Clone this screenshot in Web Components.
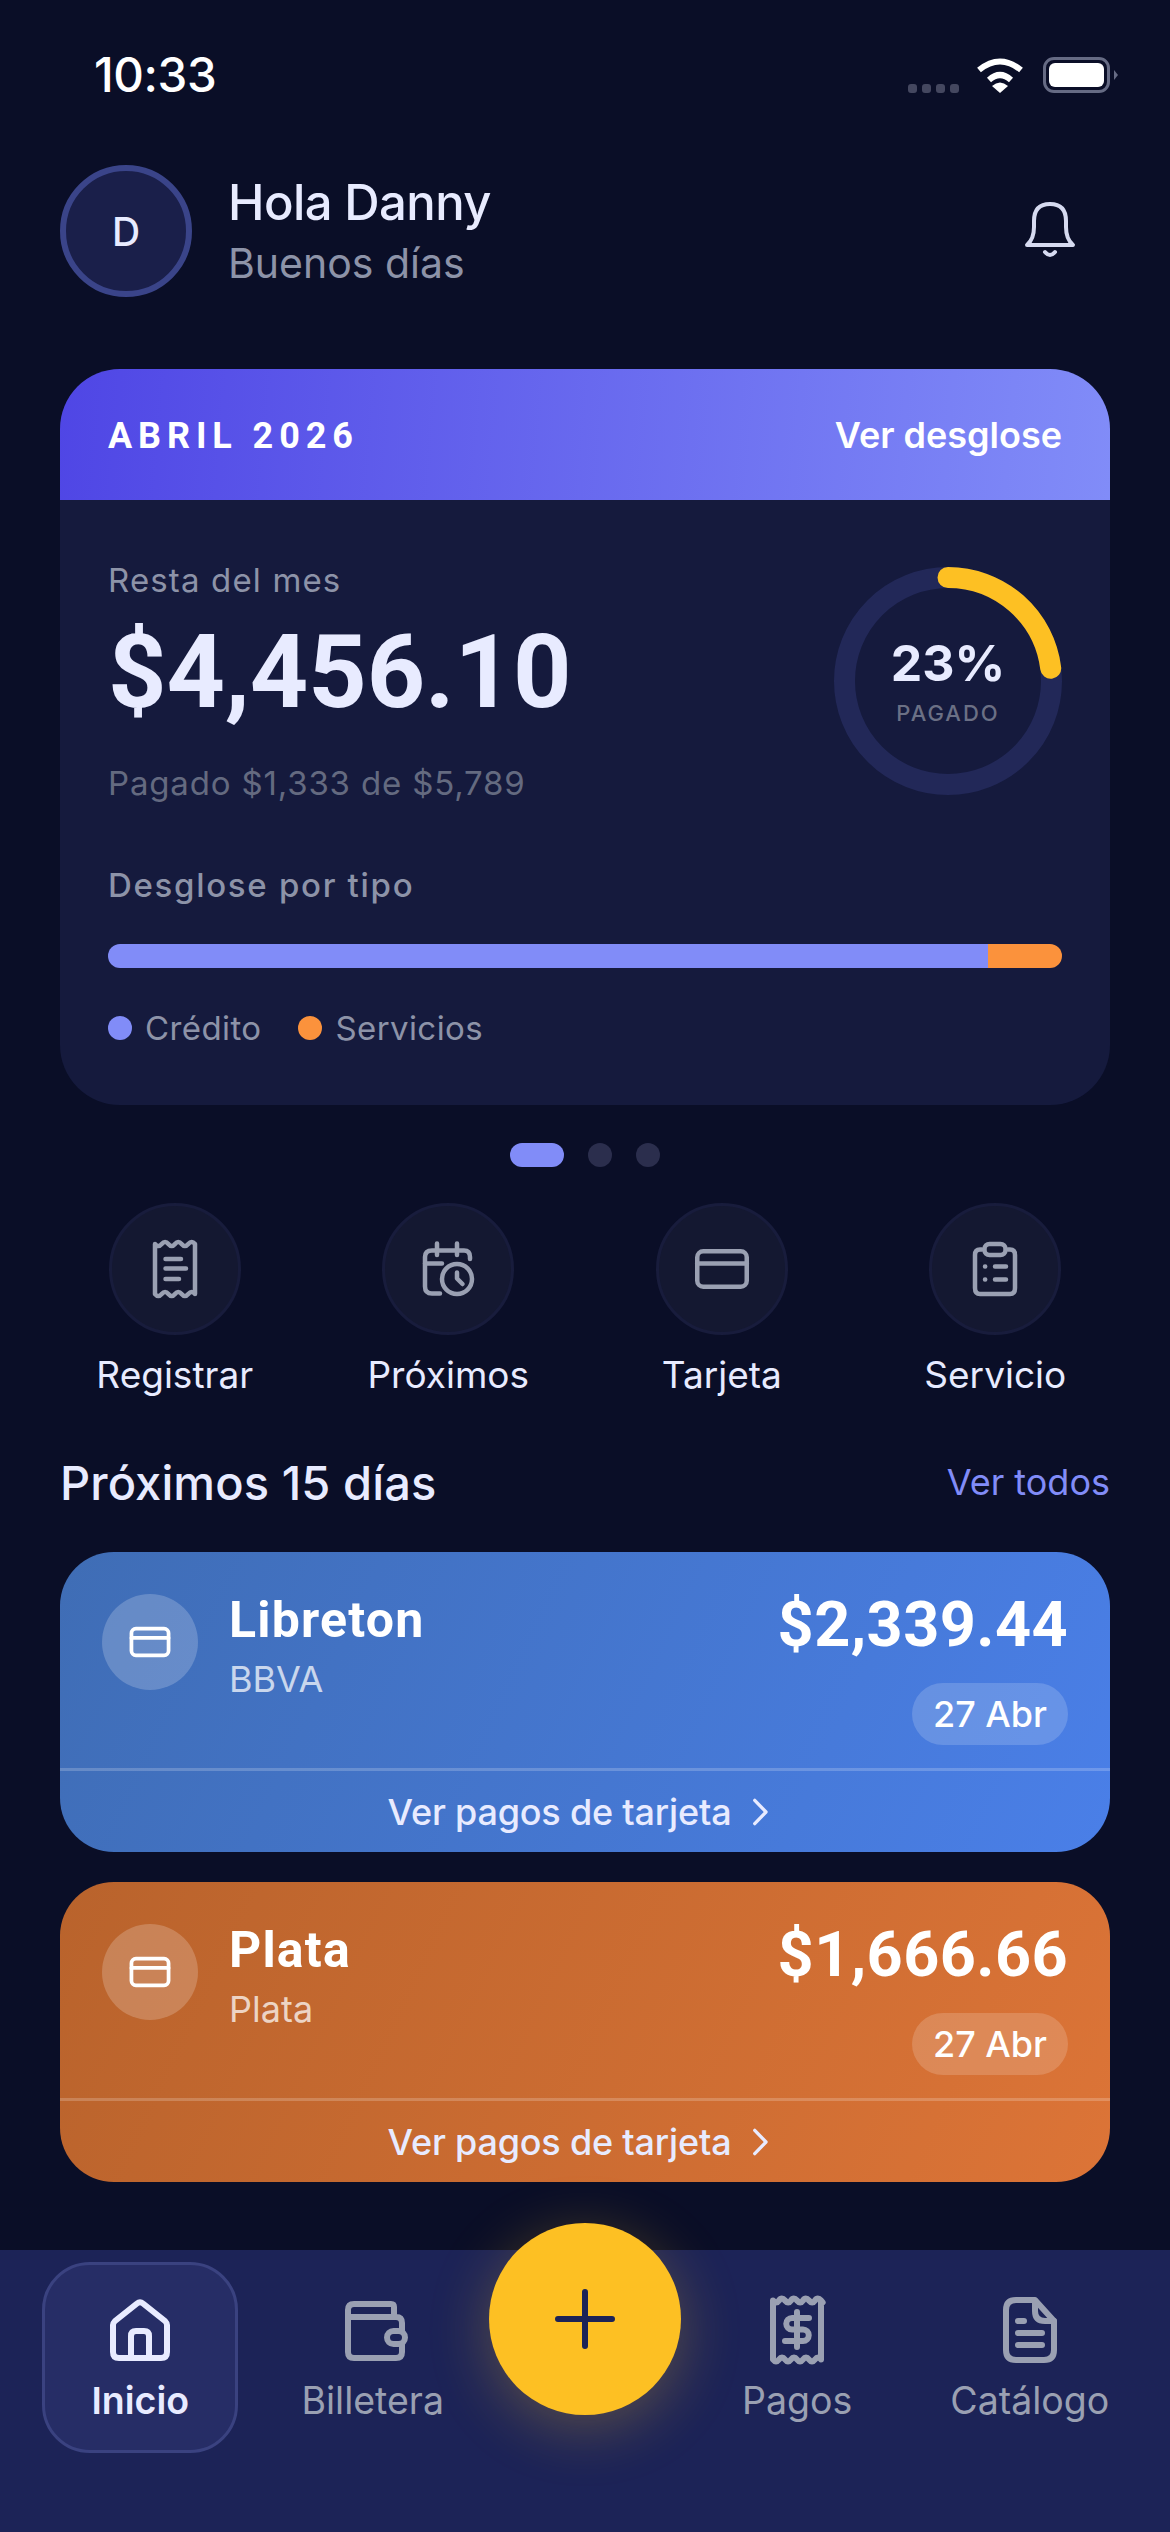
<!DOCTYPE html>
<html lang="es">
<head>
<meta charset="utf-8">
<title>Inicio</title>
<style>
  html, body { margin: 0; padding: 0; background: #0a0e27; }
  body { font-family: Inter, "Noto Sans", sans-serif; color: #e8ebff; }
  app-shell { height: 2532px; }
</style>
</head>
<body>
<app-shell>
  <status-bar time="10:33"></status-bar>
  <greeting-header initial="D" name="Hola Danny" sub="Buenos días"></greeting-header>
  <month-card></month-card>
  <pager-dots></pager-dots>
  <quick-actions>
    <quick-action label="Registrar" icon="receipt"></quick-action>
    <quick-action label="Próximos" icon="calendar"></quick-action>
    <quick-action label="Tarjeta" icon="card"></quick-action>
    <quick-action label="Servicio" icon="clipboard"></quick-action>
  </quick-actions>
  <section-head title="Próximos 15 días" link="Ver todos"></section-head>
  <due-card variant="blue" name="Libreton" bank="BBVA" amount="$2,339.44" date="27 Abr"></due-card>
  <due-card variant="orange" name="Plata" bank="Plata" amount="$1,666.66" date="27 Abr"></due-card>
  <tab-bar>
    <tab-item label="Inicio" icon="home" active></tab-item>
    <tab-item label="Billetera" icon="wallet"></tab-item>
    <fab-slot></fab-slot>
    <tab-item label="Pagos" icon="bill"></tab-item>
    <tab-item label="Catálogo" icon="doc"></tab-item>
  </tab-bar>
</app-shell>

<script>
// all icons live on a 72 box, stroke comes from the element
const ICONS = {
  receipt: `<path d="M16 11q3.3 4 6.7 0t6.7 0t6.6 0t6.6 0t6.7 0t6.7 0V61q-3.3-4-6.7 0t-6.7 0t-6.6 0t-6.6 0t-6.7 0t-6.7 0Z"/>
    <path d="M26.5 26H42M26.5 35.5H47M26.5 46H40" stroke-width="4.5"/>`,
  calendar: `<path d="M28 60.5H20Q13 60.5 13 53.5V24Q13 17.5 20 17.5H52Q58 17.5 58 24V26"/>
    <path d="M25 10.5V22M45 10.5V22M13 30.5H30"/>
    <circle cx="45" cy="46" r="15"/><path d="M45 39.5V45.5L50.5 51"/>`,
  card: `<rect x="11.25" y="18.25" width="49.5" height="35.5" rx="6"/><path d="M11.25 30.5H60.75"/>`,
  clipboard: `<path d="M23 16.5H21Q16 16.5 16 22V55Q16 61 21 61H51Q56 61 56 55V22Q56 16.5 51 16.5H49"/>
    <rect x="25.5" y="11" width="21" height="11" rx="5"/>
    <path d="M26 33.5H26.2M26 46.5H26.2M36 33.5H47M36 46.5H47"/>`,
  home: `<path d="M9 31Q9 29 11 27L33 9.5Q36 7 39 9.5L61 27Q63 29 63 31V58Q63 64 57 64H15Q9 64 9 58Z"/>
    <path d="M27 64V42Q27 37 32 37H40Q45 37 45 42V64"/>`,
  wallet: `<path d="M7 23H55Q61 23 61 29V37M61 50V58Q61 64 55 64H13Q7 64 7 58V16Q7 10 13 10H50Q53 10 53 13V22"/>
    <rect x="46" y="37" width="18" height="13" rx="6.5"/>`,
  bill: `<path d="M12 6.5q3.3 4 6 0t6 0t6 0t6 0t6 0t6 0t6 0t6 0t0 0V65.5q-3-4-6 0t-6 0t-6 0t-6 0t-6 0t-6 0t-6 0t-6 0Z"/>
    <path d="M48 24H31a5.75 5.75 0 0 0 0 11.5H42a5.75 5.75 0 0 1 0 11.5H24M36 18V53"/>`,
  doc: `<path d="M22 6H41L60 27V56Q60 66 50 66H22Q12 66 12 56V16Q12 6 22 6Z"/>
    <path d="M41 7V17Q41 27 51 27H60M24 27H30M24 39H48M24 51H48"/>`,
  bell: `<path d="M13 50Q20 44 20 32V26Q20 9 36 9Q52 9 52 26V32Q52 44 59 50Z"/><path d="M31 57Q36 63 41 57"/>`,
  chevron: `<path d="M9 8L36 36L9 64" transform="translate(12 0)"/>`
};

class AppIcon extends HTMLElement {
  connectedCallback() {
    const size = this.getAttribute('size') || 72;
    const stroke = this.getAttribute('stroke') || 5;
    this.attachShadow({mode: 'open'}).innerHTML = `
      <style>
        :host { display: block; width: ${size}px; height: ${size}px; }
        svg { display: block; width: 100%; height: 100%; fill: none; stroke: currentColor;
              stroke-width: ${stroke}; stroke-linecap: round; stroke-linejoin: round; }
      </style>
      <svg viewBox="0 0 72 72">${ICONS[this.getAttribute('name')]}</svg>`;
  }
}

class AppShell extends HTMLElement {
  connectedCallback() {
    this.attachShadow({mode: 'open'}).innerHTML = `
      <style>
        :host { display: flex; flex-direction: column; position: relative; overflow: hidden; background: #0a0e27; }
        ::slotted(tab-bar) { margin-top: auto; }
      </style>
      <slot></slot>`;
  }
}

class StatusBar extends HTMLElement {
  connectedCallback() {
    this.attachShadow({mode: 'open'}).innerHTML = `
      <style>
        :host { display: flex; align-items: flex-start; justify-content: space-between; height: 165px;
                box-sizing: border-box; padding: 47px 60px 0 94px; flex: none; }
        .time { font-size: 47.5px; line-height: 56px; font-weight: 500; color: #fff; letter-spacing: -.4px; }
        .icons { display: flex; align-items: flex-start; margin-top: 10px; }
        .signal { display: flex; gap: 5px; margin-top: 27px; margin-right: 17px; }
        .signal i { width: 9px; height: 9px; border-radius: 3px; background: #44475f; }
        .wifi { width: 48px; height: 36px; margin-right: 19px; }
        .batt { width: 67px; height: 36px; box-sizing: border-box; border: 3.5px solid #666b84; border-radius: 11px;
                padding: 3px; position: relative; }
        .batt b { display: block; height: 100%; border-radius: 6px; background: #fff; }
        .batt::after { content: ''; position: absolute; right: -11px; top: 10px; border-left: 4px solid #666b84;
                       border-top: 5px solid transparent; border-bottom: 5px solid transparent; }
      </style>
      <div class="time">${this.getAttribute('time')}</div>
      <div class="icons">
        <div class="signal"><i></i><i></i><i></i><i></i></div>
        <svg class="wifi" viewBox="0 0 48 36" fill="none" stroke="#fff" stroke-width="6">
          <path d="M3 13Q24 -4 45 13"/><path d="M13 23Q24 13 35 23"/>
          <path d="M16 29Q24 22 32 29L24 36Z" fill="#fff" stroke="none"/>
        </svg>
        <div class="batt"><b></b></div>
      </div>`;
  }
}

class GreetingHeader extends HTMLElement {
  connectedCallback() {
    this.attachShadow({mode: 'open'}).innerHTML = `
      <style>
        :host { display: flex; align-items: center; height: 132px; padding: 0 84px 0 60px; flex: none; }
        .avatar { width: 132px; height: 132px; box-sizing: border-box; border: 6px solid #3a4489; border-radius: 50%;
                  background: #1a1f4a; display: flex; align-items: center; justify-content: center;
                  font-size: 39px; font-weight: 500; color: #e8ebff; }
        .txt { margin-left: 36px; flex: 1; padding-top: 2px; }
        .name { font-size: 49px; line-height: 56px; font-weight: 550; color: #e8ebff; letter-spacing: -.6px; }
        .sub { font-size: 41px; line-height: 52px; color: #8d93a8; margin-top: 6px; }
        app-icon { color: #d6daf0; }
      </style>
      <div class="avatar">${this.getAttribute('initial')}</div>
      <div class="txt">
        <div class="name">${this.getAttribute('name')}</div>
        <div class="sub">${this.getAttribute('sub')}</div>
      </div>
      <app-icon name="bell" size="72" stroke="4"></app-icon>`;
  }
}

class ProgressRing extends HTMLElement {
  connectedCallback() {
    const pct = Number(this.getAttribute('value'));
    const r = 103.5, c = 2 * Math.PI * r;
    this.attachShadow({mode: 'open'}).innerHTML = `
      <style>
        :host { display: block; width: 228px; height: 228px; position: relative; flex: none; }
        svg { display: block; transform: rotate(-90deg); }
        .mid { position: absolute; inset: 0; display: flex; flex-direction: column; align-items: center; justify-content: center; }
        .pct { font-size: 50px; line-height: 54px; font-weight: 700; color: #e8ebff; }
        .lab { font-size: 22px; line-height: 28px; font-weight: 500; letter-spacing: 2px; color: #6b7085; margin-top: 9px; }
      </style>
      <svg width="228" height="228" viewBox="0 0 228 228" fill="none" stroke-width="21">
        <circle cx="114" cy="114" r="${r}" stroke="#222858"/>
        <circle cx="114" cy="114" r="${r}" stroke="#fdc023" stroke-linecap="round"
                stroke-dasharray="${c * pct / 100} ${c}"/>
      </svg>
      <div class="mid"><div class="pct">${pct}%</div><div class="lab">PAGADO</div></div>`;
  }
}

class MonthCard extends HTMLElement {
  connectedCallback() {
    this.attachShadow({mode: 'open'}).innerHTML = `
      <style>
        :host { display: block; margin: 72px 60px 0; border-radius: 60px; overflow: hidden; background: #151a3d; flex: none; }
        .head { height: 131px; display: flex; align-items: center; justify-content: space-between; padding: 0 48px;
                background: linear-gradient(95deg, #4f46e5, #818cf8); color: #fff; }
        .month { font-family: Roboto, sans-serif; font-size: 36px; font-weight: 700; letter-spacing: 5.9px; margin-top: 2px; }
        .link { font-size: 36px; font-weight: 600; margin-top: 1px; }
        .body { padding: 60px 48px 57px; }
        .top { display: flex; justify-content: space-between; }
        .ring { margin-top: 7px; }
        .rest { font-size: 33px; line-height: 40px; color: #8d93a8; letter-spacing: 1.15px; }
        .big { font-family: Roboto, sans-serif; font-size: 102px; line-height: 100px; font-weight: 700; color: #e8ebff;
               margin-top: 22px; letter-spacing: -.1px; }
        .paid { font-size: 33px; line-height: 40px; color: #646a80; margin-top: 41px; letter-spacing: .83px; }
        .break { font-size: 33px; line-height: 40px; font-weight: 550; color: #8d93a8; margin-top: 62px; letter-spacing: 1.7px; }
        .bar { display: flex; height: 24px; border-radius: 12px; overflow: hidden; margin-top: 39px; }
        .bar i:first-child { flex: 1; background: #818cf8; }
        .bar i:last-child { width: 74px; background: #fb923c; }
        .legend { display: flex; gap: 37px; margin-top: 40px; font-size: 33px; line-height: 40px; color: #8d93a8; letter-spacing: .4px; }
        .legend span { display: flex; align-items: center; gap: 13px; }
        .legend i { width: 24px; height: 24px; border-radius: 50%; }
      </style>
      <div class="head"><div class="month">ABRIL 2026</div><div class="link">Ver desglose</div></div>
      <div class="body">
        <div class="top">
          <div>
            <div class="rest">Resta del mes</div>
            <div class="big">$4,456.10</div>
            <div class="paid">Pagado $1,333 de $5,789</div>
          </div>
          <progress-ring class="ring" value="23"></progress-ring>
        </div>
        <div class="break">Desglose por tipo</div>
        <div class="bar"><i></i><i></i></div>
        <div class="legend">
          <span><i style="background:#818cf8"></i>Crédito</span>
          <span><i style="background:#fb923c"></i>Servicios</span>
        </div>
      </div>`;
  }
}

class PagerDots extends HTMLElement {
  connectedCallback() {
    this.attachShadow({mode: 'open'}).innerHTML = `
      <style>
        :host { display: flex; justify-content: center; gap: 24px; margin-top: 38px; flex: none; }
        i { width: 24px; height: 24px; border-radius: 12px; background: #2b2e4d; }
        i.on { width: 54px; background: #818cf8; }
      </style>
      <i class="on"></i><i></i><i></i>`;
  }
}

class QuickActions extends HTMLElement {
  connectedCallback() {
    this.attachShadow({mode: 'open'}).innerHTML = `
      <style>
        :host { display: grid; grid-template-columns: repeat(4, 1fr); margin: 36px 38px 0; flex: none; }
      </style>
      <slot></slot>`;
  }
}

class QuickAction extends HTMLElement {
  connectedCallback() {
    this.attachShadow({mode: 'open'}).innerHTML = `
      <style>
        :host { display: flex; flex-direction: column; align-items: center; }
        .circle { width: 132px; height: 132px; box-sizing: border-box; border-radius: 50%; background: #141831;
                  border: 3px solid #181c3c; display: flex; align-items: center; justify-content: center; color: #9aa0b2; }
        .label { font-size: 37px; line-height: 46px; color: #e8ebff; margin-top: 17px; }
      </style>
      <div class="circle"><app-icon name="${this.getAttribute('icon')}" stroke="4.5"></app-icon></div>
      <div class="label">${this.getAttribute('label')}</div>`;
  }
}

class SectionHead extends HTMLElement {
  connectedCallback() {
    this.attachShadow({mode: 'open'}).innerHTML = `
      <style>
        :host { display: flex; align-items: center; justify-content: space-between; margin: 54px 60px 0; height: 60px; flex: none; }
        .t { font-size: 47px; font-weight: 500; color: #e8ebff; letter-spacing: .1px; }
        .l { font-size: 36px; color: #818cf8; font-weight: 400; }
      </style>
      <div class="t">${this.getAttribute('title')}</div>
      <div class="l">${this.getAttribute('link')}</div>`;
  }
}

class DueCard extends HTMLElement {
  connectedCallback() {
    const blue = this.getAttribute('variant') === 'blue';
    this.attachShadow({mode: 'open'}).innerHTML = `
      <style>
        :host { display: block; margin: ${blue ? 40 : 30}px 60px 0; height: 300px; border-radius: 54px; overflow: hidden; flex: none;
                background: ${blue ? 'linear-gradient(115deg,#3f6db5,#4a7fe8)' : 'linear-gradient(115deg,#b9632c,#dc7437)'};
                display: flex; flex-direction: column; color: #fff; }
        .main { height: 219px; box-sizing: border-box; border-bottom: 3px solid rgba(255,255,255,.2);
                display: flex; padding: 42px 42px 0; }
        .ic { width: 96px; height: 96px; border-radius: 50%; background: rgba(255,255,255,.2);
              display: flex; align-items: center; justify-content: center; flex: none; }
        .names { margin-left: 31px; flex: 1; }
        .n { font-family: Roboto, sans-serif; font-size: 50px; line-height: 52px; font-weight: 700; margin-top: 0; letter-spacing: 1.2px; }
        .b { font-size: 36px; line-height: 44px; color: rgba(255,255,255,.72); margin-top: 11px; }
        .right { display: flex; flex-direction: column; align-items: flex-end; }
        .amt { font-family: Roboto, sans-serif; font-size: 63px; line-height: 76px; font-weight: 700; margin-top: -7px; letter-spacing: .4px; }
        .pill { height: 62px; width: 156px; justify-content: center; border-radius: 31px; background: rgba(255,255,255,.17); display: flex; align-items: center;
                font-size: 36px; font-weight: 500; margin-top: 20px; }
        .foot { flex: 1; display: flex; align-items: center; justify-content: center; font-size: 36px; font-weight: 500;
                color: #e8ebff; gap: 15px; letter-spacing: -.2px; }
        .foot app-icon { margin-right: 6px; }
      </style>
      <div class="main">
        <div class="ic"><app-icon name="card" size="54" stroke="5"></app-icon></div>
        <div class="names">
          <div class="n">${this.getAttribute('name')}</div>
          <div class="b">${this.getAttribute('bank')}</div>
        </div>
        <div class="right">
          <div class="amt">${this.getAttribute('amount')}</div>
          <div class="pill">${this.getAttribute('date')}</div>
        </div>
      </div>
      <div class="foot">Ver pagos de tarjeta <app-icon name="chevron" size="30" stroke="8"></app-icon></div>`;
  }
}

class TabBar extends HTMLElement {
  connectedCallback() {
    this.attachShadow({mode: 'open'}).innerHTML = `
      <style>
        :host { display: flex; align-items: flex-start; height: 282px; box-sizing: border-box; padding: 12px 24px 0;
                background: #1c2357; flex: none; position: relative; }
      </style>
      <slot></slot>`;
  }
}

class TabItem extends HTMLElement {
  connectedCallback() {
    const on = this.hasAttribute('active');
    const nudge = this.getAttribute('icon') === 'wallet' ? 'transform: translateX(4px);' : '';
    this.attachShadow({mode: 'open'}).innerHTML = `
      <style>
        :host { display: flex; flex: 1; justify-content: center; }
        .box { width: 196px; height: 191px; box-sizing: border-box; border-radius: 48px; display: flex; flex-direction: column;
               align-items: center; padding-top: 29px; border: 3px solid ${on ? '#3a4280' : 'transparent'};
               background: ${on ? '#262d66' : 'transparent'}; color: ${on ? '#e8ebff' : '#9aa0b2'}; white-space: nowrap; }
        app-icon { ${nudge} }
        .label { font-size: 37.5px; line-height: 44px; margin-top: 13px; font-weight: ${on ? 600 : 400}; }
      </style>
      <div class="box">
        <app-icon name="${this.getAttribute('icon')}" stroke="6"></app-icon>
        <div class="label">${this.getAttribute('label')}</div>
      </div>`;
  }
}

class FabSlot extends HTMLElement {
  connectedCallback() {
    this.attachShadow({mode: 'open'}).innerHTML = `
      <style>
        :host { display: block; width: 192px; flex: none; position: relative; }
        .fab { position: absolute; left: 0; top: -39px; width: 192px; height: 192px; border-radius: 50%; background: #fdc023;
               box-shadow: 0 12px 60px rgba(253,192,35,.28); display: flex; align-items: center; justify-content: center; }
        svg { width: 60px; height: 60px; stroke: #1c2357; stroke-width: 6; stroke-linecap: round; fill: none; }
      </style>
      <div class="fab"><svg viewBox="0 0 60 60"><path d="M30 3V57M3 30H57"/></svg></div>`;
  }
}

customElements.define('app-icon', AppIcon);
customElements.define('app-shell', AppShell);
customElements.define('status-bar', StatusBar);
customElements.define('greeting-header', GreetingHeader);
customElements.define('progress-ring', ProgressRing);
customElements.define('month-card', MonthCard);
customElements.define('pager-dots', PagerDots);
customElements.define('quick-actions', QuickActions);
customElements.define('quick-action', QuickAction);
customElements.define('section-head', SectionHead);
customElements.define('due-card', DueCard);
customElements.define('tab-bar', TabBar);
customElements.define('tab-item', TabItem);
customElements.define('fab-slot', FabSlot);
</script>
</body>
</html>
